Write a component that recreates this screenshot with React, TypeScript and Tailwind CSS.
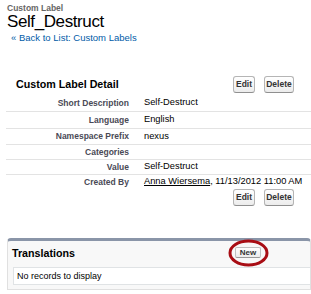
import React from "react";

function Btn({ label, w }: { label: string; w: string }) {
  return (
    <div
      className={`${w} h-[17px] flex items-center justify-center rounded-[3px] border border-[#b5b5b5] border-b-[#8f8f8f] bg-gradient-to-b from-white to-[#ececec] text-[8.5px] font-bold text-[#333] leading-none`}
    >
      {label}
    </div>
  );
}

function Buttons() {
  return (
    <div className="flex gap-[9px] pr-[17px]">
      <Btn label="Edit" w="w-[22px]" />
      <Btn label="Delete" w="w-[30px]" />
    </div>
  );
}

const rows: { label: string; value: React.ReactNode; h: string; last?: boolean }[] = [
  { label: "Short Description", value: "Self-Destruct", h: "h-[17px]" },
  { label: "Language", value: "English", h: "h-[17px]" },
  { label: "Namespace Prefix", value: "nexus", h: "h-[16px]" },
  { label: "Categories", value: "", h: "h-[15px]" },
  { label: "Value", value: "Self-Destruct", h: "h-[15px]" },
  {
    label: "Created By",
    value: (
      <>
        <span className="underline">Anna Wiersema</span>, 11/13/2012 11:00 AM
      </>
    ),
    h: "h-[14px]",
    last: true,
  },
];

export default function App() {
  return (
    <div
      className="w-[311px] h-[294px] bg-white overflow-hidden relative"
      style={{ fontFamily: '"Liberation Sans", Arial, sans-serif' }}
    >
      {/* Page header */}
      <div className="pl-[7px] pt-[3px]">
        <div className="text-[8.5px] leading-[10px] font-bold text-[#666]">Custom Label</div>
        <div className="text-[17px] leading-[18px] text-black tracking-[-0.4px]">Self_Destruct</div>
        <div className="pl-[4px] mt-[1px] text-[9.5px] leading-[12px] text-[#015ba7]">
          « Back to List: Custom Labels
        </div>
      </div>

      {/* Detail block */}
      <div className="mt-[31px] flex items-center h-[18px]">
        <div className="flex-1 pl-[16px] text-[10.7px] font-bold text-black leading-none">
          Custom Label Detail
        </div>
        <Buttons />
      </div>
      <div className="mt-[2px] ml-[6px]">
        {rows.map((r) => (
          <div
            key={r.label}
            className={`${r.h} flex items-center ${r.last ? "" : "border-b border-[#e3e3e3]"}`}
          >
            <div className="w-[123px] text-right text-[8.5px] font-bold text-[#4a4a56] leading-none">
              {r.label}
            </div>
            <div className="pl-[15px] text-[9.3px] text-black leading-none whitespace-nowrap">
              {r.value}
            </div>
          </div>
        ))}
      </div>
      <div className="flex justify-end">
        <Buttons />
      </div>

      {/* Translations related list */}
      <div className="mt-[32px] ml-[7px] border-t-[3px] border-t-[#8a95a8] border-x border-b border-x-[#e0e0e0] border-b-[#e0e0e0] rounded-t-[4px] bg-[#f8f8f8] pb-[4px]">
        <div className="h-[26px] flex items-start pt-[6px] relative">
          <div className="pl-[4px] text-[10.7px] font-bold text-black leading-[12px] w-[227px]">
            Translations
          </div>
          <div className="mt-[0px] w-[26px] h-[11px] flex items-center justify-center rounded-[2px] border border-[#c0c0c0] border-b-[#999] bg-gradient-to-b from-white to-[#ececec] text-[8px] font-bold text-[#333] leading-none">
            New
          </div>
        </div>
        <div className="ml-[5px] h-[18px] border border-r-0 border-[#e0e3e5] bg-white flex items-center pl-[3px] text-[9px] text-black leading-none">
          No records to display
        </div>
      </div>

      {/* Red annotation ellipse */}
      <svg className="absolute left-0 top-0 pointer-events-none" width="311" height="294">
        <ellipse cx="248.5" cy="253" rx="18.5" ry="12" fill="none" stroke="#a80d14" strokeWidth="3" />
      </svg>
    </div>
  );
}
